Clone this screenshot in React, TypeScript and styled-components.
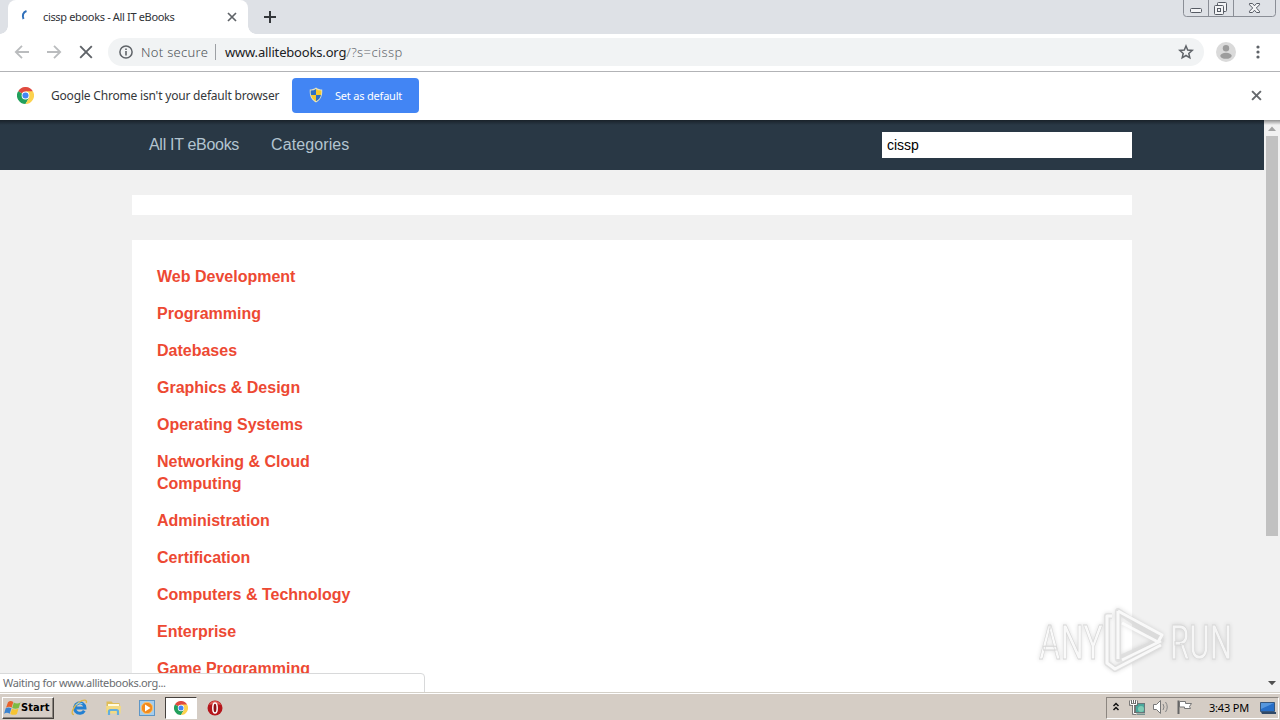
import React from "react";
import styled, { createGlobalStyle } from "styled-components";

const categories = [
    "Web Development",
    "Programming",
    "Datebases",
    "Graphics & Design",
    "Operating Systems",
    "Networking & Cloud Computing",
    "Administration",
    "Certification",
    "Computers & Technology",
    "Enterprise",
    "Game Programming",
];

export default function App() {
    return (
        <Screen>
            <GlobalStyle />
            <TabStrip>
                <Tab>
                    <Spinner viewBox="0 0 16 16">
                        <path d="M7.500 3C4 4.200 3 7.300 4.500 11" fill="none" stroke="#2f6fba" strokeWidth="2" />
                    </Spinner>
                    <TabTitle>cissp ebooks - All IT eBooks</TabTitle>
                    <Cross size={10} weight={1.7} color="#5f6368" />
                </Tab>
                <NewTab viewBox="0 0 12 12">
                    <path d="M6 0v12M0 6h12" stroke="#34373b" strokeWidth="2" />
                </NewTab>
                <WindowButtons />
            </TabStrip>
            <Toolbar>
                <NavIcon viewBox="0 0 16 16">
                    <path d="M15 8H2M8 1.8L1.8 8L8 14.2" fill="none" stroke="#babcbe" strokeWidth="1.8" />
                </NavIcon>
                <NavIcon viewBox="0 0 16 16">
                    <path d="M1 8h13M8 1.8L14.2 8L8 14.2" fill="none" stroke="#babcbe" strokeWidth="1.8" />
                </NavIcon>
                <NavIcon viewBox="0 0 16 16">
                    <path d="M2.200 2.200l11.600 11.600M13.800 2.200L2.200 13.800" stroke="#5f6368" strokeWidth="1.9" />
                </NavIcon>
                <AddressBar>
                    <svg width="14" height="14" viewBox="0 0 14 14">
                        <circle cx="7" cy="7" r="6.1" fill="none" stroke="#5f6368" strokeWidth="1.5" />
                        <path d="M7 6v4.5M7 3.4v1.5" stroke="#5f6368" strokeWidth="1.6" />
                    </svg>
                    <Security>Not secure</Security>
                    <Divider />
                    <Host>www.allitebooks.org</Host>
                    <Path>/?s=cissp</Path>
                    <Star viewBox="0 0 16 16">
                        <path
                            d="M8 2l1.700 4 4.500.4-3.400 3 1 4.400L8 11.500l-3.800 2.300 1-4.400-3.400-3L6.300 6z"
                            fill="none"
                            stroke="#5f6368"
                            strokeWidth="1.5"
                        />
                    </Star>
                </AddressBar>
                <Avatar viewBox="0 0 20 20">
                    <circle cx="10" cy="10" r="10" fill="#dadada" />
                    <circle cx="10" cy="6.3" r="3.2" fill="#9c9c9c" />
                    <ellipse cx="10" cy="13.8" rx="5.7" ry="3" fill="#9c9c9c" />
                </Avatar>
                <Menu viewBox="0 0 4 14">
                    <circle cx="2" cy="2" r="1.6" />
                    <circle cx="2" cy="7" r="1.6" />
                    <circle cx="2" cy="12" r="1.6" />
                </Menu>
            </Toolbar>
            <InfoBar>
                <ChromeLogo size={17} />
                <InfoText>Google Chrome isn't your default browser</InfoText>
                <DefaultBtn>
                    <Shield />
                    <span>Set as default</span>
                </DefaultBtn>
                <CloseInfo>
                    <Cross size={11} weight={1.8} color="#66696d" />
                </CloseInfo>
            </InfoBar>
            <PageArea>
                <Page>
                    <SiteNav>
                        <SiteLink $gap={32} $spacing={-0.3}>
                            All IT eBooks
                        </SiteLink>
                        <SiteLink $gap={0} $spacing={0.1}>
                            Categories
                        </SiteLink>
                        <Search defaultValue="cissp" />
                    </SiteNav>
                    <Banner />
                    <Main>
                        {categories.map((name) => (
                            <Category key={name}>{name}</Category>
                        ))}
                    </Main>
                </Page>
                <Scrollbar>
                    <svg width="16" height="16">
                        <path d="M4 11L8 6.500l4 4.500z" fill="#a3a3a3" />
                    </svg>
                    <Thumb />
                    <svg width="16" height="16">
                        <path d="M4 5h8l-4 4.200z" fill="#505050" />
                    </svg>
                </Scrollbar>
                <StatusBubble>Waiting for www.allitebooks.org...</StatusBubble>
                <Watermark />
            </PageArea>
            <Taskbar>
                <StartBtn>
                    <WindowsFlag />
                    <span>Start</span>
                </StartBtn>
                <QuickLaunch>
                    <TaskItem>
                        <ExplorerIcon />
                    </TaskItem>
                    <TaskItem>
                        <FolderIcon />
                    </TaskItem>
                    <TaskItem>
                        <MediaIcon />
                    </TaskItem>
                    <TaskItem $active>
                        <ChromeLogo size={14} />
                    </TaskItem>
                    <TaskItem>
                        <OperaIcon />
                    </TaskItem>
                </QuickLaunch>
                <Tray>
                    <TrayIcons />
                    <Clock>3:43 PM</Clock>
                    <DesktopIcon />
                </Tray>
            </Taskbar>
        </Screen>
    );
}

function Cross({ size, weight, color }: { size: number; weight: number; color: string }) {
    return (
        <svg width={size} height={size} viewBox="0 0 10 10">
            <path d="M1 1l8 8M9 1L1 9" stroke={color} strokeWidth={weight} />
        </svg>
    );
}

function WindowButtons() {
    return (
        <WindowControls viewBox="0 0 94 18">
            <path
                d="M.5 0v13.500a3 3 0 0 0 3 3h86a3 3 0 0 0 3-3V0M25.500 0v16M50.500 0v16"
                fill="none"
                stroke="#8a8e96"
            />
            <g fill="#f3f4f6" stroke="#565b64">
                <rect x="7.5" y="8.5" width="11" height="4" rx="1" />
                <rect x="34.5" y="2.5" width="9" height="9" rx="1" />
                <rect x="31.5" y="5.5" width="9" height="9" rx="1" />
                <rect x="34.5" y="8.5" width="3" height="3" />
                <path d="M66.500 3.500h3l2 2.300 2-2.300h3v1.300L73.300 8l3.200 3.200v1.300h-3l-2-2.300-2 2.300h-3v-1.300L69.700 8l-3.200-3.200z" />
            </g>
        </WindowControls>
    );
}

function ChromeLogo({ size }: { size: number }) {
    return (
        <svg width={size} height={size} viewBox="0 0 48 48">
            <path d="M24 24L3.200 12A24 24 0 0 1 44.800 12z" fill="#e04a3f" />
            <path d="M24 24L3.200 12A24 24 0 0 0 24 48L34.400 30z" fill="#22a05c" />
            <path d="M24 12h20.800A24 24 0 0 1 24 48l10.400-18z" fill="#fcd24e" />
            <circle cx="24" cy="24" r="11" fill="#fff" />
            <circle cx="24" cy="24" r="8.6" fill="#4286f5" />
        </svg>
    );
}

function Shield() {
    return (
        <svg width="14" height="16" viewBox="0 0 14 16">
            <path d="M7 .5C5 2 3 2.500.8 2.500.3 9 2.500 13 7 15.500 11.500 13 13.700 9 13.200 2.500 11 2.500 9 2 7 .5z" fill="#e6e3c0" />
            <path d="M7 2v6H2Q1.500 6 1.700 3.500 5 3.500 7 2zM7 8h5q-1 4.200-5 6.300z" fill="#2d70c5" />
            <path d="M7 2v6h5q.5-2 .3-4.500Q9 3.500 7 2zM7 8H2q1 4.200 5 6.300z" fill="#f5c92e" />
        </svg>
    );
}

function WindowsFlag() {
    return (
        <svg width="17" height="16" viewBox="0 0 17 16">
            <path d="M4 2.200Q6.500 0 9.300 2L7.700 7.600Q5 6 2 7.700z" fill="#e8622c" />
            <path d="M9.800 2.500Q13 4.500 16.500 2.500L14.700 8Q11.500 9.500 8.200 8z" fill="#7dbb42" />
            <path d="M1.700 8.300Q4.500 6.800 7.400 8.300L5.700 13.700Q3 12 .1 13.700z" fill="#3b83d0" />
            <path d="M8 8.700Q11 10.300 14.500 8.500L12.900 14Q10 15.700 6.300 14z" fill="#f6c433" />
        </svg>
    );
}

function ExplorerIcon() {
    return (
        <svg width="17" height="17" viewBox="0 0 17 17">
            <path d="M13.300 11.700A5.200 5.200 0 1 1 14 9H5" fill="none" stroke="#2380d2" strokeWidth="3" />
            <path
                d="M3 15.500C-1.500 15.500 3 6.500 8 3.300c4-2.800 8.500-3.300 7.300.7"
                fill="none"
                stroke="#dfb649"
                strokeWidth="1.4"
            />
            <path d="M5 5.700Q8 3 11.500 4.700" fill="none" stroke="#8bd0f5" />
        </svg>
    );
}

function FolderIcon() {
    return (
        <svg width="17" height="16" viewBox="0 0 17 16">
            <path d="M1.500 3V1.500h5L8 3h6.500v9h-13z" fill="#dfbd58" />
            <path d="M3 4h11v3H3z" fill="#fffbe0" />
            <path d="M1 6h15l-.5 7.500h-14z" fill="#f3da82" />
            <path d="M4 15V11.500q0-1.500 1.500-1.500h6q1.500 0 1.500 1.500V15" fill="none" stroke="#63aede" strokeWidth="2.2" />
        </svg>
    );
}

function MediaIcon() {
    return (
        <svg width="16" height="16" viewBox="0 0 16 16">
            <rect x=".5" y=".5" width="15" height="15" fill="#a6cdec" stroke="#5e96c6" />
            <circle cx="8" cy="8" r="5.7" fill="#f28a1d" stroke="#fbc26d" />
            <path d="M6 4.500v7l5.500-3.500z" fill="#fff" />
        </svg>
    );
}

function OperaIcon() {
    return (
        <svg width="16" height="16" viewBox="0 0 16 16">
            <circle cx="8" cy="8" r="7.5" fill="#b5161c" />
            <path d="M2 5Q4 1 8 1t6 4q-6-2-12 0z" fill="#de5a54" />
            <ellipse cx="8" cy="8" rx="2.2" ry="5" fill="#8e1015" stroke="#fff" strokeWidth="1.5" />
        </svg>
    );
}

function TrayIcons() {
    return (
        <svg width="86" height="18" viewBox="0 0 86 18">
            <path d="M2.500 7l2.500-2.500L7.500 7M2.500 11L5 8.500 7.500 11" fill="none" stroke="#111" strokeWidth="1.5" />
            <rect x="24.5" y="4.5" width="9" height="9" fill="#4aa79c" stroke="#697779" />
            <path d="M26 14.500h8v1.500h-8z" fill="#789391" />
            <circle cx="30" cy="10" r="3" fill="#80ccb5" />
            <path
                d="M19.500 1.500v4h6v-4M21.500 1v3M23.500 1v3M22.500 6v8.500h3"
                fill="none"
                stroke="#666"
                strokeWidth="2.6"
            />
            <path d="M19.500 1.500v4h6v-4M21.500 1v3M23.500 1v3M22.500 6v8.500h3" fill="none" stroke="#fff" />
            <path d="M42.500 5.500h3l4-4v13l-4-4h-3z" fill="#fff" stroke="#777" />
            <path d="M52 5q2 3 0 6M54.500 3q3.500 5 0 10" fill="none" stroke="#858585" />
            <path d="M67.500 15V1.500" stroke="#666" strokeWidth="2" />
            <path d="M68.500 2.500h6v2h6l-2 3 1 2h-6V8h-5z" fill="#fff" stroke="#777" />
        </svg>
    );
}

function DesktopIcon() {
    return (
        <svg width="16" height="14" viewBox="0 0 16 14">
            <path d="M.5 1.500h14v9H.5z" fill="#286fc8" stroke="#36577e" />
            <path d="M1 2h13L1 8z" fill="#5697de" />
            <path d="M1 11h15v2H2z" fill="#304967" />
        </svg>
    );
}

function Watermark() {
    return (
        <WatermarkSvg viewBox="0 0 246 84">
            <g fill="none" stroke="#dcdcdc" strokeWidth="6" strokeLinejoin="round" opacity=".75">
                <path d="M81 16h-5v47l8 6 46-24M87 11v48l43-19z" />
            </g>
            <g fill="#fff" fillOpacity=".7" stroke="#d6d6d6" strokeWidth=".8">
                <text x="8" y="59" textLength="64" lengthAdjust="spacingAndGlyphs">
                    ANY
                </text>
                <text x="139" y="59" textLength="62" lengthAdjust="spacingAndGlyphs">
                    RUN
                </text>
            </g>
            <g fill="none" stroke="#fff" strokeWidth="3" strokeLinejoin="round" opacity=".8">
                <path d="M81 16h-5v47l8 6 46-24M87 11v48M87 11l44 24-4 7-36-19M91 60l39-19" />
            </g>
        </WatermarkSvg>
    );
}

const GlobalStyle = createGlobalStyle`
    * {
        box-sizing: border-box;
    }
    body {
        margin: 0;
        overflow: hidden;
    }
    svg {
        flex: none;
    }
`;

const Screen = styled.div`
    width: 1280px;
    height: 720px;
    display: flex;
    flex-direction: column;
    overflow: hidden;
    background: #fff;
    font-family: "Noto Sans", sans-serif;
    white-space: nowrap;
`;

const TabStrip = styled.div`
    height: 34px;
    flex: none;
    display: flex;
    align-items: flex-start;
    padding-left: 8px;
    background: #dee1e6;
`;

const Tab = styled.div`
    position: relative;
    width: 240px;
    height: 34px;
    display: flex;
    align-items: center;
    padding: 0 11px;
    border-radius: 8px 8px 0 0;
    background: #fff;

    &::before,
    &::after {
        content: "";
        position: absolute;
        bottom: 0;
        width: 8px;
        height: 8px;
    }
    &::before {
        left: -8px;
        background: radial-gradient(circle at 0 0, transparent 7.5px, #fff 8px);
    }
    &::after {
        right: -8px;
        background: radial-gradient(circle at 100% 0, transparent 7.5px, #fff 8px);
    }
`;

const Spinner = styled.svg`
    width: 16px;
    height: 16px;
    margin-bottom: 2px;
`;

const TabTitle = styled.span`
    flex: 1;
    margin: 0 0 2px 8px;
    font-size: 11px;
    letter-spacing: -0.34px;
    color: #303236;
`;

const NewTab = styled.svg`
    width: 12px;
    height: 12px;
    margin: 11px 0 0 16px;
`;

const WindowControls = styled.svg`
    width: 94px;
    height: 18px;
    margin: 0 3px 0 auto;
`;

const Toolbar = styled.div`
    height: 38px;
    flex: none;
    display: flex;
    align-items: center;
    padding: 0 20px 1px 14px;
    border-bottom: 1px solid #b2b3b6;
`;

const NavIcon = styled.svg`
    width: 16px;
    height: 16px;
    margin-right: 16px;
`;

const AddressBar = styled.div`
    width: 1096px;
    height: 28px;
    display: flex;
    align-items: center;
    margin-left: -2px;
    padding: 0 10px 0 11px;
    border-radius: 14px;
    background: #f1f3f4;
    font-size: 13px;
`;

const Security = styled.span`
    width: 67px;
    margin: 0 7px 0 8px;
    font-weight: 300;
    letter-spacing: 0.3px;
    color: #4f5358;
`;

const Divider = styled.i`
    width: 1px;
    height: 16px;
    margin-right: 9px;
    background: #9da0a4;
`;

const Host = styled.span`
    letter-spacing: -0.17px;
    color: #202124;
`;

const Path = styled.span`
    font-weight: 300;
    letter-spacing: 0.4px;
    color: #65696e;
`;

const Star = styled.svg`
    width: 16px;
    height: 16px;
    margin-left: auto;
`;

const Avatar = styled.svg`
    width: 20px;
    height: 20px;
    margin-left: 12px;
`;

const Menu = styled.svg`
    width: 4px;
    height: 14px;
    margin-left: auto;
    fill: #5f6368;
`;

const InfoBar = styled.div`
    height: 48px;
    flex: none;
    display: flex;
    align-items: center;
    padding: 0 18px 1px 17px;
`;

const InfoText = styled.span`
    width: 229px;
    margin: 0 12px 0 17px;
    font-size: 12px;
    letter-spacing: -0.19px;
    color: #35373a;
`;

const DefaultBtn = styled.button`
    width: 127px;
    height: 35px;
    display: flex;
    align-items: center;
    gap: 12px;
    padding: 0 0 1px 17px;
    border: 0;
    border-radius: 4px;
    background: #4285f4;
    font-family: "Noto Sans", sans-serif;
    font-size: 11px;
    letter-spacing: -0.2px;
    color: #fff;
`;

const CloseInfo = styled.div`
    display: flex;
    margin-left: auto;
`;

const PageArea = styled.div`
    position: relative;
    height: 572px;
    flex: none;
    display: flex;
    overflow: hidden;

    &::before {
        content: "";
        position: absolute;
        top: 0;
        width: 100%;
        height: 5px;
        background: linear-gradient(rgba(0, 0, 0, 0.4), transparent);
    }
`;

const Page = styled.div`
    width: 1264px;
    background: #f1f1f1;
    font-family: "Liberation Sans", Arial, sans-serif;
`;

const SiteNav = styled.div`
    height: 50px;
    display: flex;
    align-items: center;
    padding: 0 132px 0 149px;
    background: #293845;
`;

const SiteLink = styled.a<{ $gap: number; $spacing: number }>`
    margin-right: ${(props) => props.$gap}px;
    font-size: 16px;
    line-height: 20px;
    letter-spacing: ${(props) => props.$spacing}px;
    color: #b3c4d0;
`;

const Search = styled.input`
    width: 250px;
    height: 26px;
    margin-left: auto;
    padding: 0 5px;
    border: 0;
    background: #fff;
    font-family: "Liberation Sans", Arial, sans-serif;
    font-size: 14px;
    color: #000;
`;

const Banner = styled.div`
    width: 1000px;
    height: 20px;
    margin: 25px 0 25px 132px;
    background: #fff;
`;

const Main = styled.div`
    width: 1000px;
    height: 460px;
    margin-left: 132px;
    padding: 26px 25px 0;
    background: #fff;
`;

const Category = styled.a`
    display: block;
    width: 200px;
    margin-bottom: 15px;
    font-size: 16px;
    font-weight: 700;
    line-height: 22px;
    white-space: normal;
    color: #ed4933;
`;

const Scrollbar = styled.div`
    width: 16px;
    display: flex;
    flex-direction: column;
    background: #f1f1f1;
`;

const Thumb = styled.div`
    width: 12px;
    height: 400px;
    margin: 0 2px auto;
    background: #c1c1c1;
`;

const StatusBubble = styled.div`
    position: absolute;
    left: -1px;
    bottom: -1px;
    width: 426px;
    height: 20px;
    padding-left: 3px;
    border: 1px solid #d8d9da;
    border-radius: 0 4px 0 0;
    background: #fff;
    font-size: 11px;
    line-height: 18px;
    letter-spacing: -0.34px;
    color: #696c70;
`;

const WatermarkSvg = styled.svg`
    position: absolute;
    left: 1031px;
    top: 480px;
    width: 246px;
    height: 84px;
    overflow: visible;
    font-family: Roboto, sans-serif;
    font-size: 49px;
    filter: drop-shadow(0 0 2px rgba(0, 0, 0, 0.16));
`;

const Taskbar = styled.div`
    height: 28px;
    flex: none;
    display: flex;
    align-items: center;
    padding: 2px 1px 0 2px;
    border-top: 1px solid #d4d0c8;
    box-shadow: inset 0 1px #fff;
    background: #d5cdc5;
`;

const StartBtn = styled.button`
    width: 52px;
    height: 22px;
    display: flex;
    align-items: center;
    padding: 0 0 0 1px;
    border: 1px solid;
    border-color: #fff #45413d #45413d #fff;
    box-shadow: inset -1px -1px #8c8680;
    background: #d5cdc5;
    font-family: "DejaVu Sans Condensed", "DejaVu Sans", sans-serif;
    font-size: 11px;
    font-weight: 700;
    letter-spacing: 0.1px;
    color: #000;
`;

const QuickLaunch = styled.div`
    display: flex;
    margin-left: 9px;
    gap: 2px;
`;

const TaskItem = styled.div<{ $active?: boolean }>`
    width: 32px;
    height: 22px;
    display: flex;
    align-items: center;
    justify-content: center;
    ${(props) =>
        props.$active &&
        `
        border: 1px solid;
        border-color: #45413d #fff #fff #45413d;
        background: #fff;
    `}
`;

const Tray = styled.div`
    width: 173px;
    height: 22px;
    display: flex;
    align-items: center;
    margin-left: auto;
    padding-left: 4px;
    border: 1px solid;
    border-color: #8c8680 #fff #fff #8c8680;
`;

const Clock = styled.span`
    width: 40px;
    margin: 0 11px 1px 12px;
    font-size: 11px;
    letter-spacing: -0.2px;
    color: #000;
`;
